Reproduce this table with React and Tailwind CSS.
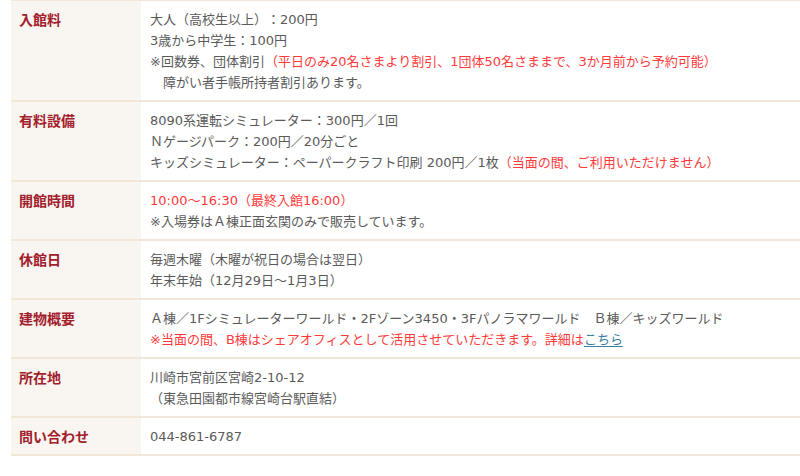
import React from "react";

const R = ({ children }) => <span className="text-[#ff3a3a]">{children}</span>;

const rows = [
  {
    label: "入館料",
    lines: [
      <>大人（高校生以上）：200円</>,
      <>3歳から中学生：100円</>,
      <>※回数券、団体割引<R>（平日のみ20名さまより割引、1団体50名さままで、3か月前から予約可能）</R></>,
      <>　障がい者手帳所持者割引あります。</>,
    ],
  },
  {
    label: "有料設備",
    lines: [
      <>8090系運転シミュレーター：300円／1回</>,
      <>Ｎゲージパーク：200円／20分ごと</>,
      <>キッズシミュレーター：ペーパークラフト印刷 200円／1枚<R>（当面の間、ご利用いただけません）</R></>,
    ],
  },
  {
    label: "開館時間",
    lines: [
      <R>10:00～16:30（最終入館16:00）</R>,
      <>※入場券はＡ棟正面玄関のみで販売しています。</>,
    ],
  },
  {
    label: "休館日",
    lines: [<>毎週木曜（木曜が祝日の場合は翌日）</>, <>年末年始（12月29日～1月3日）</>],
  },
  {
    label: "建物概要",
    lines: [
      <>Ａ棟／1Fシミュレーターワールド・2Fゾーン3450・3Fパノラマワールド　Ｂ棟／キッズワールド</>,
      <>
        <R>※当面の間、B棟はシェアオフィスとして活用させていただきます。詳細は</R>
        <a className="text-[#3b7ea1] underline underline-offset-2 decoration-1">こちら</a>
      </>,
    ],
  },
  {
    label: "所在地",
    lines: [<>川崎市宮前区宮崎2-10-12</>, <>（東急田園都市線宮崎台駅直結）</>],
  },
  {
    label: "問い合わせ",
    lines: [<>044-861-6787</>],
  },
];

export default function App() {
  return (
    <div
      className="w-[800px] h-[476px] bg-white overflow-hidden pl-[11px] [text-spacing-trim:space-all]"
      style={{ fontFamily: '"DejaVu Sans", "Noto Sans CJK JP", sans-serif' }}
    >
      <div className="-mt-px border-t-2 border-[#f1e6d8]">
        {rows.map((r, i) => (
          <div key={i} className="flex border-b-2 border-[#f1e6d8]">
            <div className="w-[130px] shrink-0 bg-[#f9f5f0] pl-2 pt-2 pb-[7px] text-[14px] leading-[21px] font-bold text-[#a2202c] [font-family:'Noto_Sans_CJK_JP',sans-serif]">
              {r.label}
            </div>
            <div className="flex-1 pl-[9px] pt-2 pb-[7px] text-[13px] leading-[21px] text-[#5a5a5a] whitespace-nowrap">
              {r.lines.map((l, j) => (
                <div key={j}>{l}</div>
              ))}
            </div>
          </div>
        ))}
      </div>
    </div>
  );
}
